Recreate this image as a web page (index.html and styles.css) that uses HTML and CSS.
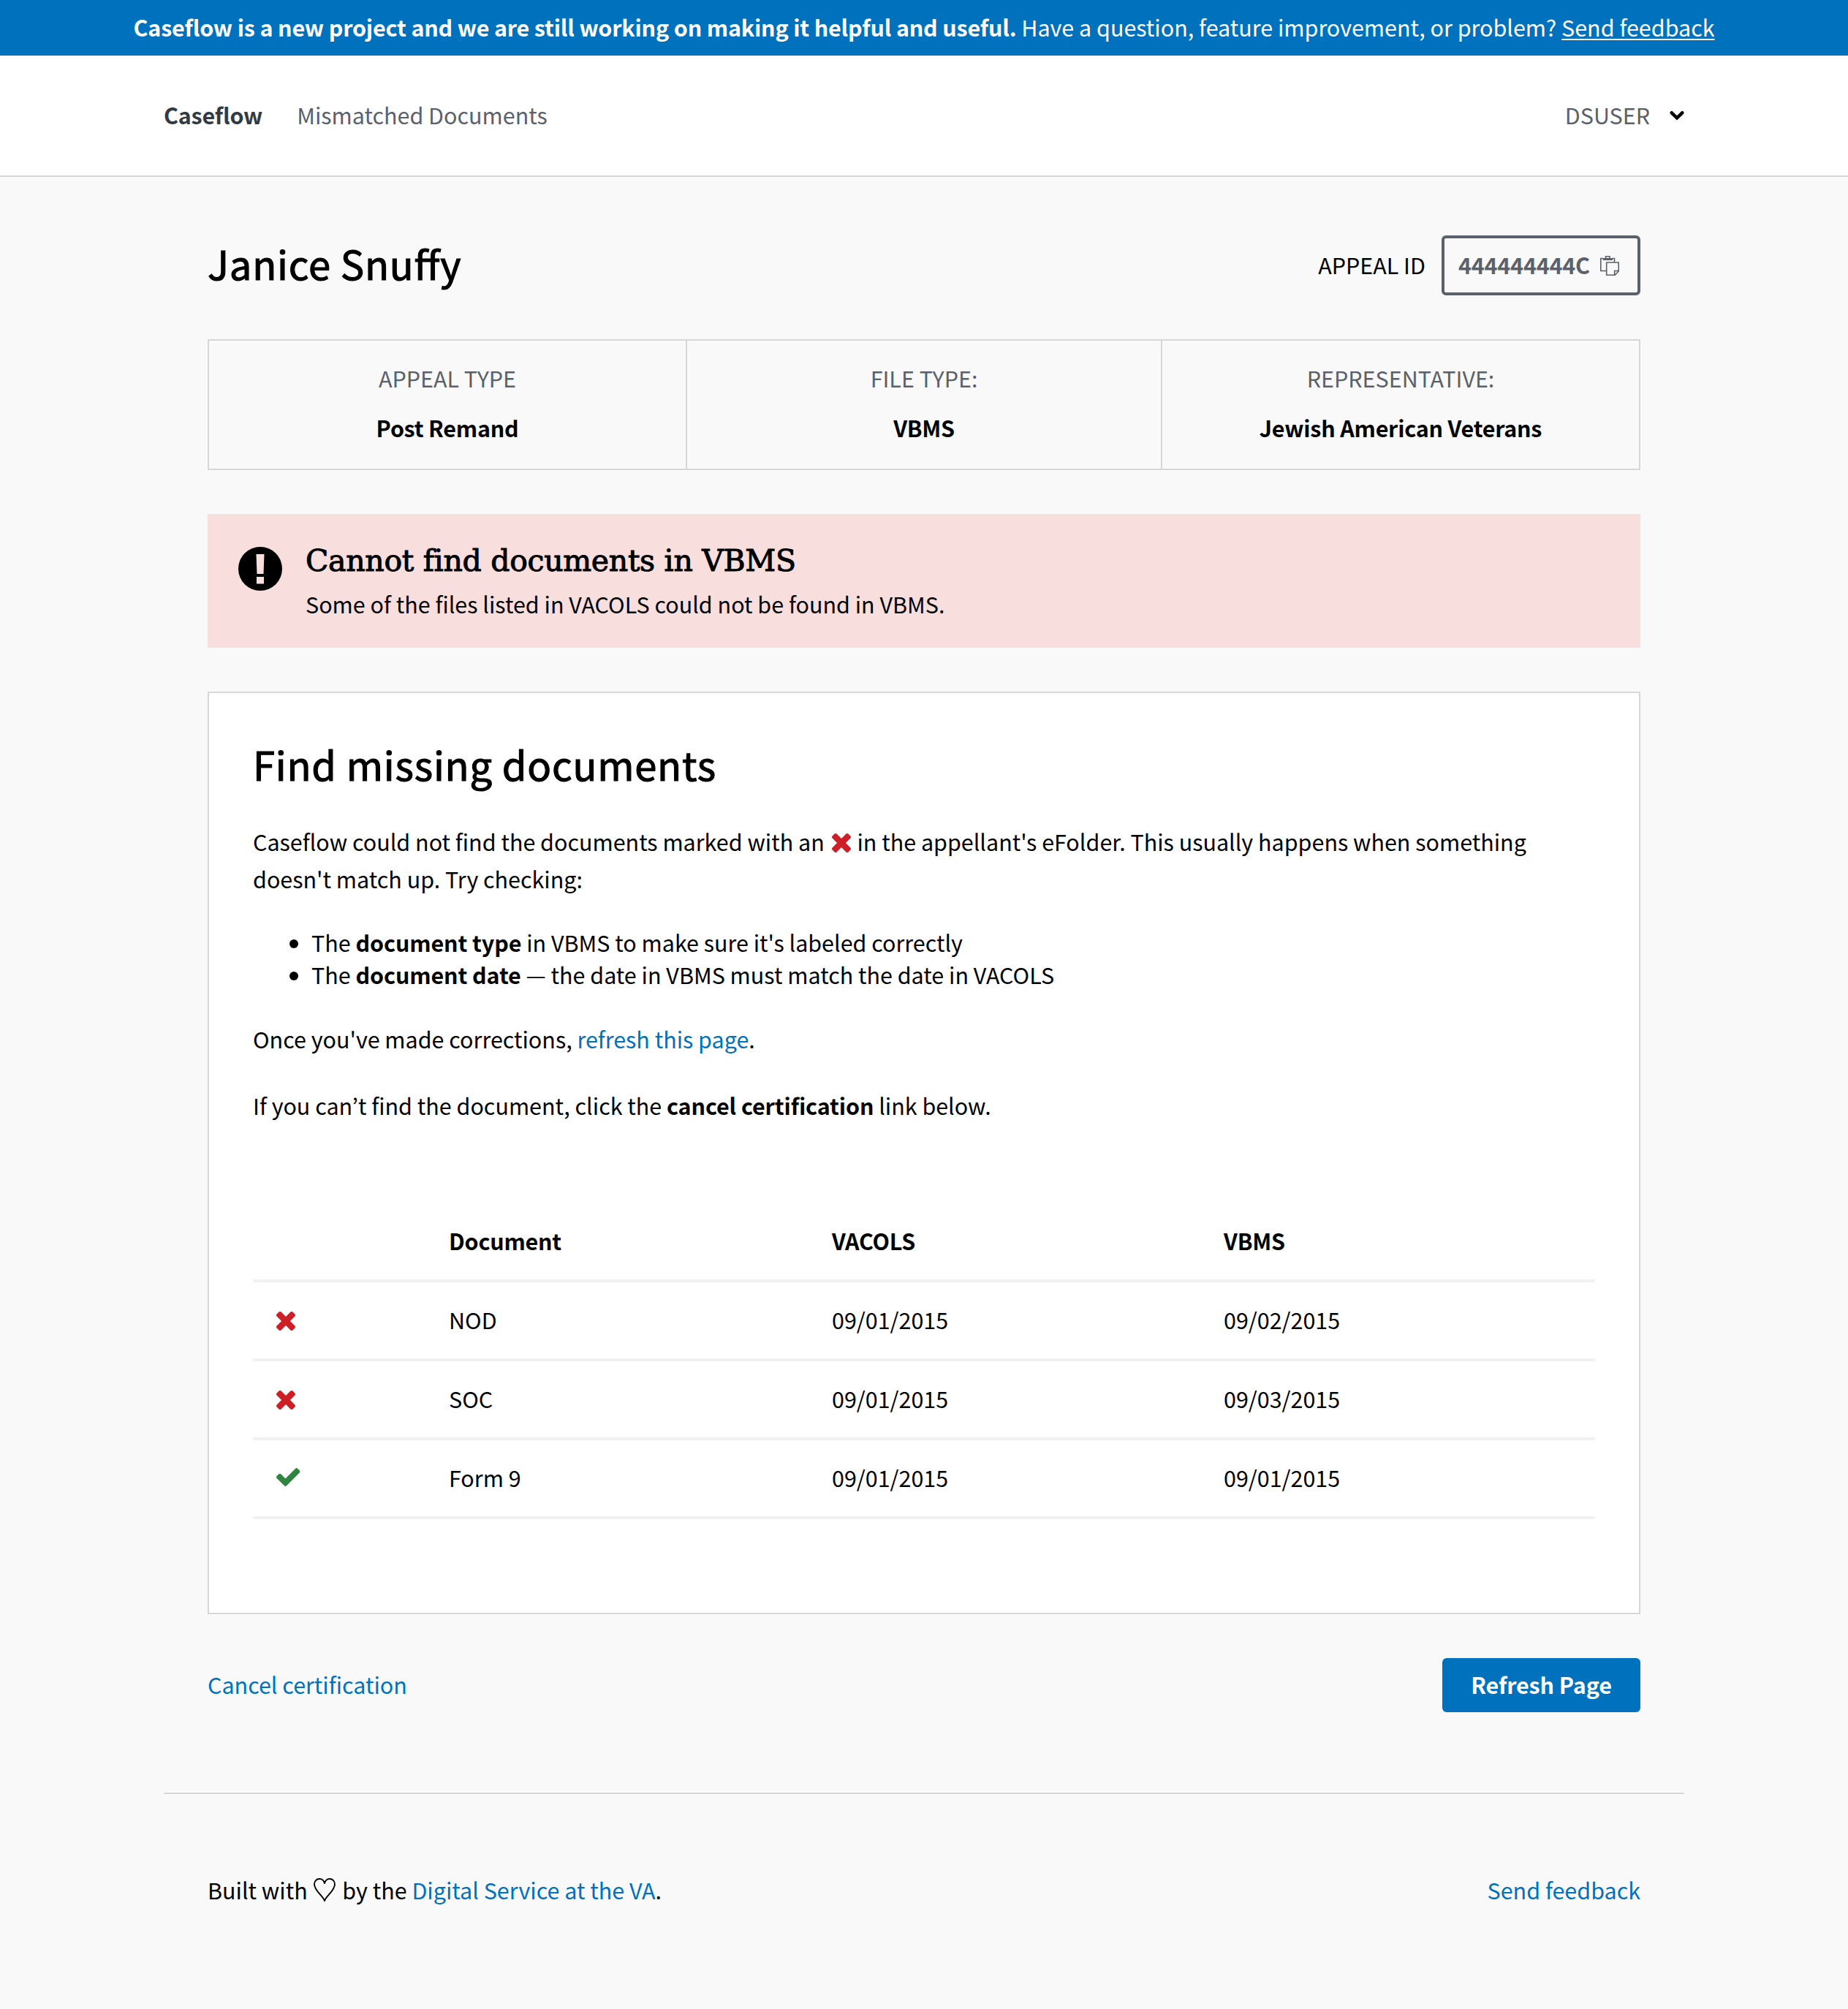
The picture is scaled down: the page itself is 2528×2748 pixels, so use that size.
FILE: index.html
```html
<!DOCTYPE html>
<html lang="en">
<head>
<meta charset="utf-8">
<title>Caseflow - Mismatched Documents</title>
<link rel="stylesheet" href="styles.css">
</head>
<body>
<svg class="sprite" aria-hidden="true">
  <symbol id="times" viewBox="110 366 1188 1188"><path d="M1298 1322q0 40-28 68l-136 136q-28 28-68 28t-68-28l-294-294-294 294q-28 28-68 28t-68-28l-136-136q-28-28-28-68t28-68l294-294-294-294q-28-28-28-68t28-68l136-136q28-28 68-28t68 28l294 294 294-294q28-28 68-28t68 28l136 136q28 28 28 68t-28 68l-294 294 294 294q28 28 28 68z"/></symbol>
  <symbol id="check" viewBox="121 334 1550 1188"><path d="M1671 566q0 40-28 68l-724 724-136 136q-28 28-68 28t-68-28l-136-136-362-362q-28-28-28-68t28-68l136-136q28-28 68-28t68 28l294 295 656-657q28-28 68-28t68 28l136 136q28 28 28 68z"/></symbol>
</svg>
<div class="banner"><p><strong>Caseflow is a new project and we are still working on making it helpful and useful.</strong> <span class="question">Have a question, feature improvement, or problem?</span> <a href="#">Send feedback</a></p></div>
<header class="header">
  <div class="wide header-row">
    <h1>Caseflow</h1>
    <span class="section">Mismatched Documents</span>
    <a class="user" href="#"><span>DSUSER</span>
      <svg class="chevron" viewBox="0 0 20 14"><path d="M2.800 3.300 10 10.300l7.200-7"/></svg></a>
  </div>
</header>
<main class="page">
  <div class="title-row">
    <h2>Janice Snuffy</h2>
    <span class="id-label">APPEAL ID</span>
    <button class="copy"><span>444444444C</span>
      <svg viewBox="0 0 26 27"><path d="M8.500 20.500H.8V3.500H4M16.500 3.500h3V8.500M7.500 4V.8h5.500V4M8.700 9h16.500v12l-5 5.200H8.700zM25.200 20.500h-5.500v5.700"/><path class="clip" d="M3.700 3h13.300v3H3.700z"/></svg></button>
  </div>
  <div class="facts">
    <div><span>APPEAL TYPE</span><strong>Post Remand</strong></div>
    <div><span>FILE TYPE:</span><strong>VBMS</strong></div>
    <div><span>REPRESENTATIVE:</span><strong>Jewish American Veterans</strong></div>
  </div>
  <div class="alert">
    <svg viewBox="0 0 60 60"><circle cx="30" cy="30" r="30"/><path class="mark" d="M24.500 10h11l-1 27h-9zM25 41h10v9.500H25z"/></svg>
    <div><h3>Cannot find documents in VBMS</h3><p>Some of the files listed in VACOLS could not be found in VBMS.</p></div>
  </div>
  <section class="card">
    <h2>Find missing documents</h2>
    <p class="intro">Caseflow could not find the documents marked with an <svg class="times"><use href="#times"/></svg> in the appellant's eFolder. This usually happens when something<br>doesn't match up. Try checking:</p>
    <ul>
      <li>The <strong>document type</strong> in VBMS to make sure it's labeled correctly</li>
      <li>The <strong>document date</strong> — the date in VBMS must match the date in VACOLS</li>
    </ul>
    <p class="fix">Once you've made corrections, <a href="#">refresh this page</a>.</p>
    <p class="cancel-hint">If you can’t find the document, click the <strong>cancel certification</strong> link below.</p>
    <table>
      <thead><tr><th></th><th>Document</th><th>VACOLS</th><th>VBMS</th></tr></thead>
      <tbody>
        <tr><td><svg class="times"><use href="#times"/></svg></td><td>NOD</td><td>09/01/2015</td><td>09/02/2015</td></tr>
        <tr><td><svg class="times"><use href="#times"/></svg></td><td>SOC</td><td>09/01/2015</td><td>09/03/2015</td></tr>
        <tr><td><svg class="check"><use href="#check"/></svg></td><td>Form 9</td><td>09/01/2015</td><td>09/01/2015</td></tr>
      </tbody>
    </table>
  </section>
  <div class="actions"><a href="#">Cancel certification</a><button class="primary">Refresh Page</button></div>
</main>
<footer class="wide footer">
  <p>Built with <svg class="heart" viewBox="0 0 30 32"><path d="M15 31C13 24.500 1 17 1 8.500 1 4 4 1 8 1c4 0 6.500 3 7 6.500C15.500 4 18 1 22 1s7 3 7 7.500C29 17 17 24.500 15 31z"/></svg> by the <a href="#">Digital Service at the VA</a>.</p>
  <a href="#">Send feedback</a>
</footer>
</body>
</html>
```
FILE: styles.css
```css
* { box-sizing: border-box; }
body {
  margin: 0;
  background: #f9f9f9;
  color: #000;
  font: 30.47px/44px "Noto Sans CJK KR", "Noto Sans", sans-serif;
  font-feature-settings: "liga" 1;
}
h1, h2, h3, p, ul { margin: 0; padding: 0; font-weight: 400; }
strong, th { font-weight: 600; letter-spacing: -0.22px; }
a { color: #0071bc; text-decoration: none; }
button { font: inherit; font-feature-settings: inherit; margin: 0; }
svg { display: block; }
.sprite { display: none; }
.wide { width: 2080px; margin: 0 auto; }

.banner {
  height: 76px;
  padding-top: 15px;
  background: #0071bc;
  color: #fff;
  text-align: center;
  white-space: nowrap;
}
.banner strong { letter-spacing: -0.17px; }
.banner a { color: #fff; text-decoration: underline; text-decoration-thickness: 2px; text-underline-offset: 3px; }

.header { height: 166px; background: #fff; border-bottom: 2px solid #d6d7d9; }
.header-row { display: flex; align-items: center; height: 162px; }
.header h1 { font-size: 30.470px; font-weight: 600; letter-spacing: -0.22px; color: #323a45; }
.section { margin-left: 47px; color: #5b616b; }
.user { margin-left: auto; display: flex; align-items: center; gap: 27px; color: #5b616b; }
.chevron { width: 20px; height: 14px; margin-top: 2px; fill: none; stroke: #000; stroke-width: 4.600; stroke-linecap: round; }

.page { width: 1960px; margin: 0 auto; padding-top: 80px; }
.title-row { display: flex; align-items: center; height: 82px; }
.page h2 { font-size: 54.300px; line-height: 82px; font-weight: 400; letter-spacing: 0.78px; -webkit-text-stroke: 1.1px #000; }
.title-row h2 { padding-bottom: 6px; flex: 1; }
.id-label { margin-right: 22px; padding-bottom: 2px; }
.copy {
  display: flex;
  align-items: center;
  gap: 14px;
  width: 272px;
  height: 82px;
  padding: 0 0 0 19px;
  border: 4px solid #5b616b;
  border-radius: 6px;
  background: transparent;
  color: #5b616b;
  font-weight: 700;
  letter-spacing: -0.200px;
}
.copy span { padding-bottom: 2px; }
.copy svg { width: 26px; height: 27px; fill: none; stroke: #5b616b; stroke-width: 1.600; }
.copy .clip { fill: #5b616b; stroke: none; }

.facts {
  display: grid;
  grid-template-columns: 652px 650px 1fr;
  height: 179px;
  margin-top: 60px;
  border: 2px solid #d6d7d9;
  text-align: center;
}
.facts div { display: flex; flex-direction: column; gap: 24px; padding-top: 29px; }
.facts div + div { border-left: 2px solid #d6d7d9; }
.facts span { color: #5b616b; }

.alert { display: flex; gap: 32px; height: 183px; margin-top: 60px; padding: 45px 42px 0; background: #f9dede; }
.alert svg { width: 60px; height: 60px; }
.alert .mark { fill: #f9dede; }
.alert h3 { font: 400 41px/44px "DejaVu Serif", serif; margin-top: -3px; letter-spacing: -0.3px; -webkit-text-stroke: 1px #000; }
.alert p { margin-top: 15px; }

.card { height: 1262px; margin-top: 60px; padding: 60px; border: 2px solid #d6d7d9; background: #fff; }
.card h2 { margin-top: -4px; }
.intro { margin-top: 40px; line-height: 51px; }
.card .times { width: 26px; height: 26px; fill: #cd2026; }
.intro .times { display: inline-block; margin: 0 2px 0 3px; vertical-align: -2px; }
.card .check { width: 32.500px; height: 25px; fill: #2e8540; }
.card ul { margin-top: 39px; padding-left: 80px; }
.card strong { letter-spacing: -0.1px; }
.fix { margin-top: 44px; }
.cancel-hint { margin-top: 47px; }
table { width: 1836px; margin-top: 112px; border-collapse: separate; border-spacing: 0; table-layout: fixed; text-align: left; }
th, td { height: 108px; padding: 0 30px 2px; border-bottom: 4px solid #f1f1f1; }
th:nth-child(1) { width: 238px; }
th:nth-child(2) { width: 524px; }
th:nth-child(3) { width: 536px; }
td .times { margin: 3px 0 0 2px; }
td .check { margin: 0 0 2px 2px; }

.actions { display: flex; justify-content: space-between; align-items: center; height: 74px; margin-top: 60px; }
.actions > a { padding-bottom: 2px; }
.primary { width: 271px; height: 74px; padding: 0 0 2px; border: 0; border-radius: 6px; background: #0071bc; color: #fff; font-weight: 700; letter-spacing: -0.100px; }

.footer { display: flex; justify-content: space-between; margin-top: 110px; padding: 109px 60px 0; border-top: 2px solid #d6d7d9; }
.heart { display: inline-block; width: 30px; height: 32px; margin: 0 2px; vertical-align: -3px; fill: none; stroke: #000; stroke-width: 1.900; }
```
